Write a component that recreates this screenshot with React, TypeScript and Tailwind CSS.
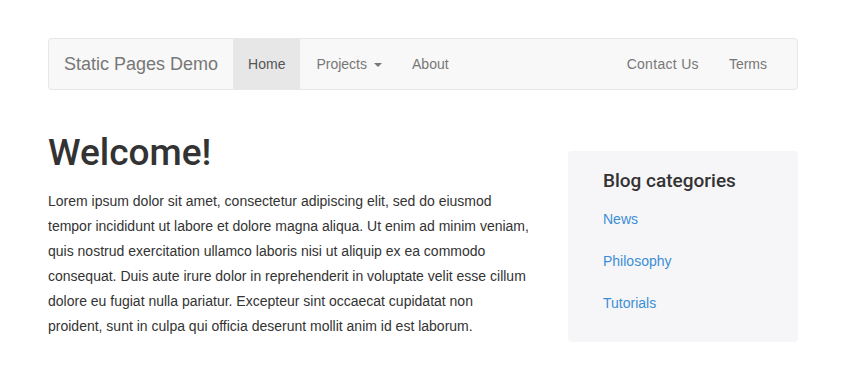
import React from "react";

const links = ["News", "Philosophy", "Tutorials"];

const lines = [
  "Lorem ipsum dolor sit amet, consectetur adipiscing elit, sed do eiusmod",
  "tempor incididunt ut labore et dolore magna aliqua. Ut enim ad minim veniam,",
  "quis nostrud exercitation ullamco laboris nisi ut aliquip ex ea commodo",
  "consequat. Duis aute irure dolor in reprehenderit in voluptate velit esse cillum",
  "dolore eu fugiat nulla pariatur. Excepteur sint occaecat cupidatat non",
  "proident, sunt in culpa qui officia deserunt mollit anim id est laborum.",
];

const App = () => {
  return (
    <div className="min-h-screen bg-white font-['Liberation_Sans',Arial,sans-serif] text-[#333]">
      <div className="mx-auto w-[750px] pt-[38px]">
        <nav className="flex h-[52px] items-stretch rounded-[4px] border border-[#e7e7e7] bg-[#f8f8f8] text-[14px] text-[#777]">
          <a className="flex items-center px-[15px] text-[18px] text-[#777]">Static Pages Demo</a>
          <a className="flex items-center bg-[#e7e7e7] px-[15px] text-[#555]">Home</a>
          <a className="flex items-center pl-[16px] pr-[15px]">
            Projects
            <span className="ml-[7px] mt-[2px] h-0 w-0 border-x-[4px] border-t-[4px] border-x-transparent border-t-[#777]"></span>
          </a>
          <a className="flex items-center px-[15px]">About</a>
          <div className="ml-auto mr-[15px] flex">
            <a className="flex items-center px-[15px] tracking-[0.3px]">Contact Us</a>
            <a className="flex items-center px-[15px]">Terms</a>
          </div>
        </nav>
        <div className="flex gap-[30px]">
          <main className="w-[490px]">
            <h1 className="mt-[43px] font-['Roboto',sans-serif] text-[37px] leading-[1.1] font-medium text-[#333]">
              Welcome!
            </h1>
            <p className="mt-[15px] text-[14px] leading-[25px] text-[#333]">
              {lines.map((l) => (
                <span key={l} className="block whitespace-nowrap">
                  {l}
                </span>
              ))}
            </p>
          </main>
          <aside className="mt-[61px] h-[191px] w-[230px] rounded-[4px] bg-[#f6f6f8] px-[35px] pt-[18px]">
            <h4 className="font-['Roboto',sans-serif] text-[19px] leading-[24px] font-medium text-[#333]">
              Blog categories
            </h4>
            <ul className="mt-[18px] flex flex-col gap-[25px] text-[14px] leading-[17px]">
              {links.map((l) => (
                <li key={l}>
                  <a className="text-[#3b8ed6]">{l}</a>
                </li>
              ))}
            </ul>
          </aside>
        </div>
      </div>
    </div>
  );
};

export default App;
